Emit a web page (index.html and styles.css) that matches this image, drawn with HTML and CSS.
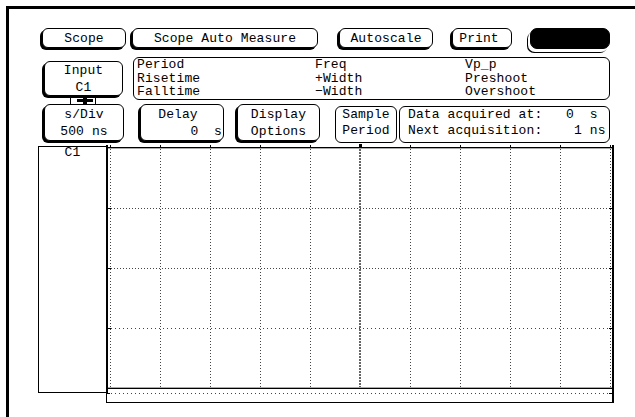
FILE: index.html
```html
<!DOCTYPE html>
<html>
<head>
    <title>Scope Auto Measure</title>
    <link rel="stylesheet" href="styles.css">
</head>
<body>
    <div class="screen">
        <div class="row top-row">
            <div class="btn btn-scope">Scope</div>
            <div class="btn btn-menu">Scope Auto Measure</div>
            <div class="btn btn-autoscale">Autoscale</div>
            <div class="btn btn-print">Print</div>
            <div class="btn btn-run"></div>
        </div>

        <div class="row mid-row">
            <div class="btn btn-two btn-input">
                <span>Input</span>
                <span>C1</span>
                <div class="link"><span class="plus"></span></div>
            </div>
            <div class="measures">
                <span>Period</span><span>Freq</span><span>Vp_p</span>
                <span>Risetime</span><span>+Width</span><span>Preshoot</span>
                <span>Falltime</span><span>&minus;Width</span><span>Overshoot</span>
            </div>
        </div>

        <div class="row ctl-row">
            <div class="btn btn-two btn-sdiv">
                <span>s/Div</span>
                <span>500 ns</span>
            </div>
            <div class="btn btn-two btn-delay">
                <span class="delay-title">Delay</span>
                <span class="delay-value">0  s</span>
            </div>
            <div class="btn btn-two btn-display">
                <span>Display</span>
                <span>Options</span>
            </div>
            <div class="box box-sample">
                <span>Sample</span>
                <span>Period</span>
            </div>
            <div class="box box-data">
                <span>Data acquired at:   0  s</span>
                <span>Next acquisition:    1 ns</span>
            </div>
        </div>

        <div class="graph">
            <div class="chan">C1</div>
            <svg class="plot" width="512" height="262" viewBox="0 0 512 262">
                <!-- frame -->
                <rect x="0" y="2" width="2" height="248" fill="#000"/>
                <rect x="506" y="2" width="2" height="258" fill="#000"/>
                <line x1="0.5" y1="250" x2="0.5" y2="260" stroke="#000"/>
                <line x1="2" y1="4.5" x2="506" y2="4.5" stroke="#000"/>
                <line x1="2" y1="5.5" x2="506" y2="5.5" stroke="#aaa"/>
                <line x1="2" y1="244.5" x2="506" y2="244.5" stroke="#aaa"/>
                <line x1="2" y1="245.5" x2="506" y2="245.5" stroke="#000"/>
                <line x1="0" y1="259.5" x2="508" y2="259.5" stroke="#000"/>

                <!-- top ticks -->
                <g stroke="#000">
                    <line x1="4.5" y1="2" x2="4.5" y2="4"/>
                    <line x1="54.5" y1="2" x2="54.5" y2="4"/>
                    <line x1="104.5" y1="2" x2="104.5" y2="4"/>
                    <line x1="154.5" y1="2" x2="154.5" y2="4"/>
                    <line x1="204.5" y1="2" x2="204.5" y2="4"/>
                    <line x1="304.5" y1="2" x2="304.5" y2="4"/>
                    <line x1="354.5" y1="2" x2="354.5" y2="4"/>
                    <line x1="404.5" y1="2" x2="404.5" y2="4"/>
                    <line x1="454.5" y1="2" x2="454.5" y2="4"/>
                    <line x1="504.5" y1="2" x2="504.5" y2="4"/>
                </g>
                <rect x="253" y="1" width="3" height="4" fill="#000"/>

                <!-- side ticks -->
                <g stroke="#000">
                    <line x1="2" y1="65.5" x2="5" y2="65.5"/>
                    <line x1="2" y1="125.5" x2="5" y2="125.5"/>
                    <line x1="2" y1="185.5" x2="5" y2="185.5"/>
                    <line x1="0" y1="250.5" x2="4" y2="250.5"/>
                    <line x1="503" y1="65.5" x2="506" y2="65.5"/>
                    <line x1="503" y1="125.5" x2="506" y2="125.5"/>
                    <line x1="503" y1="185.5" x2="506" y2="185.5"/>
                    <line x1="503" y1="250.5" x2="506" y2="250.5"/>
                </g>

                <!-- vertical grid -->
                <g stroke="#444" stroke-dasharray="1 2">
                    <line x1="4.5" y1="6" x2="4.5" y2="244"/>
                    <line x1="54.5" y1="6" x2="54.5" y2="244"/>
                    <line x1="104.5" y1="6" x2="104.5" y2="244"/>
                    <line x1="154.5" y1="6" x2="154.5" y2="244"/>
                    <line x1="204.5" y1="6" x2="204.5" y2="244"/>
                    <line x1="304.5" y1="6" x2="304.5" y2="244"/>
                    <line x1="354.5" y1="6" x2="354.5" y2="244"/>
                    <line x1="404.5" y1="6" x2="404.5" y2="244"/>
                    <line x1="454.5" y1="6" x2="454.5" y2="244"/>
                    <line x1="504.5" y1="6" x2="504.5" y2="244"/>
                </g>
                <line x1="254" y1="6" x2="254" y2="244" stroke="#666" stroke-width="2" stroke-dasharray="2 1"/>

                <!-- horizontal grid -->
                <g stroke="#444">
                    <line x1="5" y1="65.5" x2="503" y2="65.5" stroke-dasharray="1 2"/>
                    <line x1="5" y1="125.5" x2="503" y2="125.5" stroke-dasharray="1 2"/>
                    <line x1="5" y1="185.5" x2="503" y2="185.5" stroke-dasharray="1 3"/>
                    <line x1="5" y1="250.5" x2="503" y2="250.5" stroke-dasharray="1 3"/>
                </g>
            </svg>
        </div>
    </div>
</body>
</html>
```

FILE: styles.css
```css
body {
    margin: 0;
    background-color: #fff;
    color: #000;
    font-family: "Liberation Mono", monospace;
    font-size: 13px;
    letter-spacing: 0.1px;
}

.screen {
    margin: 6px 0 0 6px;
    height: 411px;
    border-top: 3px solid #000;
    border-left: 3px solid #000;
    box-sizing: border-box;
}

.row {
    display: flex;
    align-items: flex-start;
}

.btn {
    position: relative;
    display: flex;
    align-items: center;
    justify-content: center;
    box-sizing: border-box;
    border: 1px solid #000;
    border-radius: 6px;
    background-color: #fff;
    box-shadow: -2px 2px 0 #000;
    white-space: pre;
}

.btn-two {
    flex-direction: column;
    line-height: 17px;
}

/* top row */
.top-row {
    margin-top: 19px;
}

.top-row .btn {
    height: 20px;
}

.btn-scope {
    margin-left: 33px;
    width: 84px;
}

.btn-menu {
    margin-left: 6px;
    width: 186px;
}

.btn-autoscale {
    margin-left: 21px;
    width: 94px;
}

.btn-print {
    margin-left: 19px;
    width: 60px;
    padding-right: 6px;
}

.top-row .btn-run {
    margin-left: 18px;
    width: 80px;
    height: 21px;
    background-color: #000;
    border-radius: 7px;
    box-shadow: -2px 3px 0 #fff, -3px 4px 0 #000;
}

/* input + measurement list */
.mid-row {
    margin-top: 8px;
}

.btn-input {
    margin-top: 4px;
    margin-left: 35px;
    width: 79px;
    height: 35px;
}

.link {
    position: absolute;
    left: 25px;
    top: 34px;
    width: 26px;
    height: 8px;
    box-sizing: border-box;
    border-left: 1px solid #000;
    border-right: 1px solid #000;
}

.plus::before,
.plus::after {
    content: "";
    position: absolute;
    background-color: #000;
}

.plus::before {
    left: 6px;
    top: 3px;
    width: 16px;
    height: 3px;
}

.plus::after {
    left: 12px;
    top: 0;
    width: 4px;
    height: 11px;
}

.measures {
    margin-left: 10px;
    width: 477px;
    height: 43px;
    box-sizing: border-box;
    border: 1px solid #000;
    border-radius: 6px;
    padding-left: 3px;
    display: grid;
    grid-template-columns: 178px 150px 1fr;
    line-height: 13.5px;
}

/* control row */
.ctl-row {
    margin-top: 4px;
}

.ctl-row .btn {
    height: 37px;
}

.btn-sdiv {
    margin-left: 35px;
    width: 80px;
}

.btn-delay {
    margin-left: 16px;
    width: 84px;
}

.delay-title {
    padding-right: 8px;
}

.delay-value {
    align-self: flex-end;
    padding-right: 1px;
}

.btn-display {
    margin-left: 13px;
    width: 83px;
}

.box {
    margin-top: 2px;
    height: 37px;
    box-sizing: border-box;
    border: 1px solid #000;
    border-radius: 6px;
    display: flex;
    flex-direction: column;
    line-height: 16px;
    white-space: pre;
}

.box-sample {
    margin-left: 15px;
    width: 62px;
    align-items: center;
}

.box-data {
    margin-left: 2px;
    width: 211px;
    padding-left: 8px;
}

/* waveform area */
.graph {
    display: flex;
    align-items: flex-start;
    margin-left: 29px;
}

.chan {
    margin-top: 3px;
    width: 68px;
    height: 247px;
    box-sizing: border-box;
    border: 1px solid #000;
    border-right: none;
    text-align: center;
    line-height: 12px;
}

.plot {
    display: block;
}
```
